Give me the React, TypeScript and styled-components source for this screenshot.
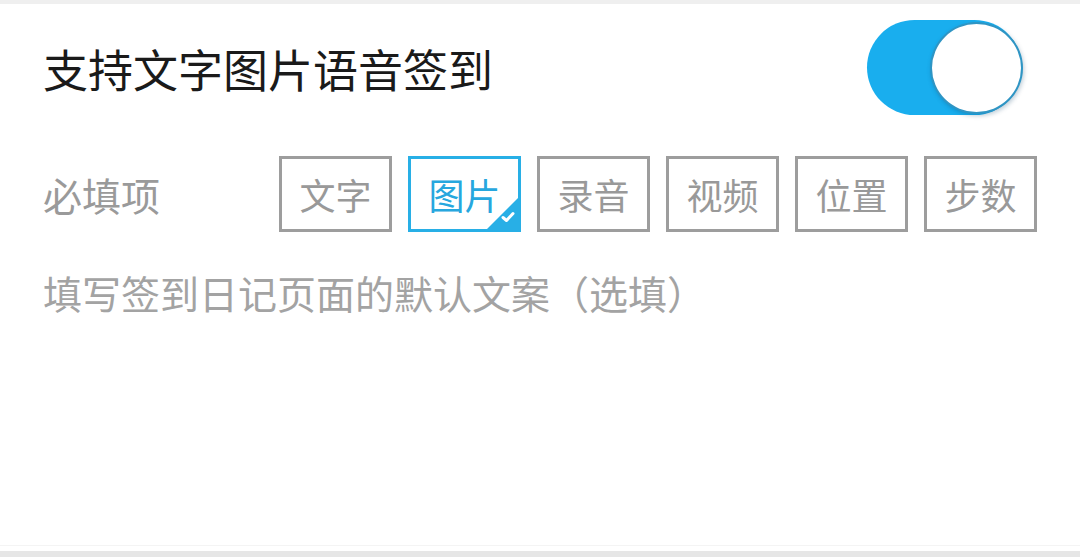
import React, { useState } from "react";
import styled, { createGlobalStyle } from "styled-components";

const GlobalStyle = createGlobalStyle`
  html, body { margin: 0; padding: 0; background: #ffffff; }
  body { font-family: "Noto Sans CJK SC", "Noto Sans", sans-serif; }
`;

const Page = styled.div`
  width: 1080px;
  height: 557px;
  display: flex;
  flex-direction: column;
  background: #ffffff;
  overflow: hidden;
`;

const TopBar = styled.div`
  height: 4px;
  background: #efefef;
  flex-shrink: 0;
`;

const Content = styled.div`
  flex: 1;
  display: flex;
  flex-direction: column;
  padding: 0 43px;
`;

const HeaderRow = styled.div`
  height: 128px;
  display: flex;
  align-items: center;
  justify-content: space-between;
  padding-right: 15px;
`;

const Title = styled.div`
  font-size: 45px;
  color: #1a1a1a;
  line-height: 1;
`;

const Track = styled.button<{ $on: boolean }>`
  position: relative;
  width: 155px;
  height: 95px;
  border: none;
  padding: 0;
  border-radius: 48px;
  background: ${(p) => (p.$on ? "#19aeee" : "#d6d6d6")};
  cursor: pointer;
  margin-top: -1px;
`;

const Knob = styled.span<{ $on: boolean }>`
  position: absolute;
  top: 2px;
  ${(p) => (p.$on ? "right: -1px;" : "left: 2px;")}
  width: 93px;
  height: 92px;
  box-sizing: border-box;
  border-radius: 50%;
  background: #ffffff;
  border: 2px solid #2f95c4;
  box-shadow: 1px 2px 4px rgba(0, 60, 100, 0.25);
`;

const OptionRow = styled.div`
  display: flex;
  align-items: center;
  margin-top: 24px;
  height: 76px;
`;

const Label = styled.div`
  width: 236px;
  font-size: 39px;
  color: #9a9a9a;
  line-height: 1;
`;

const Chips = styled.div`
  display: flex;
  gap: 16px;
`;

const Chip = styled.div<{ $selected: boolean }>`
  position: relative;
  width: 113px;
  height: 76px;
  box-sizing: border-box;
  border: 3px solid ${(p) => (p.$selected ? "#28afe6" : "#9d9d9d")};
  color: ${(p) => (p.$selected ? "#27a7de" : "#999999")};
  font-size: 36px;
  display: flex;
  align-items: center;
  justify-content: center;
  line-height: 1;
  overflow: hidden;
  cursor: pointer;
`;

const Corner = styled.span`
  position: absolute;
  right: 0;
  bottom: 0;
  width: 31px;
  height: 31px;
  background: #28afe6;
  clip-path: polygon(100% 0, 100% 100%, 0 100%);
`;

const CheckIcon = styled.svg`
  position: absolute;
  right: 3px;
  bottom: 6px;
  width: 14px;
  height: 12px;
`;

const Placeholder = styled.div`
  margin-top: 35px;
  font-size: 39px;
  line-height: 50px;
  color: #a3a3a3;
`;

const BottomBar = styled.div`
  flex-shrink: 0;
  height: 11px;
  border-top: 1px solid #f4f4f4;
  display: flex;
  flex-direction: column;
  justify-content: flex-end;
`;

const BottomFill = styled.div`
  height: 6px;
  background: #e6e6e6;
`;

const options = ["文字", "图片", "录音", "视频", "位置", "步数"];

export default function App() {
  const [on, setOn] = useState(true);
  const [selected, setSelected] = useState<string[]>(["图片"]);

  const toggle = (o: string) =>
    setSelected((s) => (s.includes(o) ? s.filter((x) => x !== o) : [...s, o]));

  return (
    <>
      <GlobalStyle />
      <Page>
        <TopBar />
        <Content>
          <HeaderRow>
            <Title>支持文字图片语音签到</Title>
            <Track $on={on} onClick={() => setOn(!on)} aria-label="toggle">
              <Knob $on={on} />
            </Track>
          </HeaderRow>
          <OptionRow>
            <Label>必填项</Label>
            <Chips>
              {options.map((o) => {
                const sel = selected.includes(o);
                return (
                  <Chip key={o} $selected={sel} onClick={() => toggle(o)}>
                    {o}
                    {sel && (
                      <>
                        <Corner />
                        <CheckIcon viewBox="0 0 14 12">
                          <path
                            d="M2 6.5 L5.5 9.5 L12 2.5"
                            fill="none"
                            stroke="#ffffff"
                            strokeWidth="3"
                            strokeLinecap="round"
                            strokeLinejoin="round"
                          />
                        </CheckIcon>
                      </>
                    )}
                  </Chip>
                );
              })}
            </Chips>
          </OptionRow>
          <Placeholder>填写签到日记页面的默认文案（选填）</Placeholder>
        </Content>
        <BottomBar>
          <BottomFill />
        </BottomBar>
      </Page>
    </>
  );
}
